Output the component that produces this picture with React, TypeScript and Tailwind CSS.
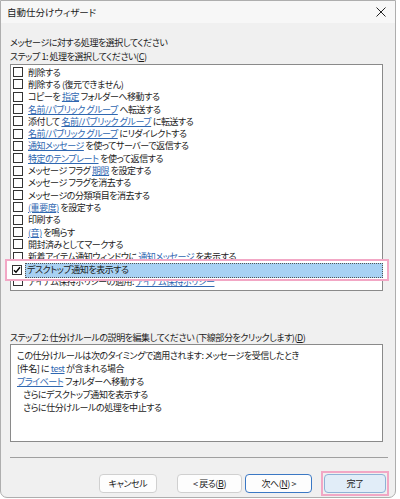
import React from "react"

type Part = string | { link: string }
type Row = { parts: Part[]; checked?: boolean }

const rows: Row[] = [
  { parts: ["削除する"] },
  { parts: ["削除する (復元できません)"] },
  { parts: ["コピーを ", { link: "指定" }, " フォルダーへ移動する"] },
  { parts: [{ link: "名前/パブリック グループ" }, " へ転送する"] },
  { parts: ["添付して ", { link: "名前/パブリック グループ" }, " に転送する"] },
  { parts: [{ link: "名前/パブリック グループ" }, " にリダイレクトする"] },
  { parts: [{ link: "通知メッセージ" }, " を使ってサーバーで返信する"] },
  { parts: [{ link: "特定のテンプレート" }, " を使って返信する"] },
  { parts: ["メッセージ フラグ ", { link: "期限" }, " を設定する"] },
  { parts: ["メッセージ フラグを消去する"] },
  { parts: ["メッセージの分類項目を消去する"] },
  { parts: [{ link: "(重要度)" }, " を設定する"] },
  { parts: ["印刷する"] },
  { parts: [{ link: "(音)" }, " を鳴らす"] },
  { parts: ["開封済みとしてマークする"] },
  { parts: ["新着アイテム通知ウィンドウに ", { link: "通知メッセージ" }, " を表示する"] },
  { parts: ["デスクトップ通知を表示する"], checked: true },
  { parts: ["アイテム保持ポリシーの適用: ", { link: "アイテム保持ポリシー" }] },
]

const Text = ({ parts }: { parts: Part[] }) => (
  <>
    {parts.map((p, i) =>
      typeof p === "string" ? (
        <span key={i} className="whitespace-pre">{p}</span>
      ) : (
        <span key={i} className="whitespace-pre text-[#2f67b1] underline underline-offset-[1px]">{p.link}</span>
      )
    )}
  </>
)

const Check = ({ checked }: { checked?: boolean }) => (
  <span className="w-[10px] h-[10px] border border-[#333] bg-white flex items-center justify-center shrink-0">
    {checked && (
      <svg width="8" height="8" viewBox="0 0 8 8">
        <path d="M1 4.2 L3 6.3 L7 1.3" fill="none" stroke="#000" strokeWidth="1.4" />
      </svg>
    )}
  </span>
)

const Btn = ({ label, className = "" }: { label: React.ReactNode; className?: string }) => (
  <div className={`h-[19px] rounded-[4px] border flex items-center justify-center ${className}`}>{label}</div>
)

export default function App() {
  return (
    <div className="w-[400px] h-[499px] bg-white relative overflow-hidden text-[#1a1a1a] text-[9px] tracking-[-0.45px] [font-family:'Noto_Sans_CJK_JP','Noto_Sans',sans-serif] [font-feature-settings:'palt']">
      <div className="relative w-[396px] h-[498px] bg-[#f0f0f0] border border-[#aeaeae] rounded-b-[7px] flex flex-col">
        {/* title bar */}
        <div className="h-[22px] bg-[#f7f7f7] flex items-center justify-between pl-[6px] pr-[9px] shrink-0">
          <span className="text-[9.5px] tracking-normal">自動仕分けウィザード</span>
          <svg width="10" height="10" viewBox="0 0 10 10">
            <path d="M0.5 0.5 L9.5 9.5 M9.5 0.5 L0.5 9.5" stroke="#222" strokeWidth="1" />
          </svg>
        </div>

        <div className="pl-[9px] pr-[6px] flex flex-col">
          <div className="mt-[13px] leading-[13px]">メッセージに対する処理を選択してください</div>
          <div className="mt-[1px] leading-[13px]">
            ステップ 1: 処理を選択してください(<span className="underline">C</span>)
          </div>

          {/* action list */}
          <div className="mt-[1px] w-[373px] h-[227px] bg-white border border-[#8a8a8a] overflow-hidden pt-[1px]">
            {rows.map((r, i) => (
              <div key={i} className="h-[12.3px] flex items-center gap-[5px] pl-[2px] leading-[11px]">
                <Check checked={r.checked} />
                <div className="flex">
                  <Text parts={r.parts} />
                </div>
              </div>
            ))}
          </div>

          <div className="mt-[40px] leading-[13px]">
            ステップ 2: 仕分けルールの説明を編集してください (下線部分をクリックします)(<span className="underline">D</span>)
          </div>

          {/* rule description */}
          <div className="w-[373px] h-[98px] bg-white border border-[#8a8a8a] pl-[6px] pt-[4px] leading-[13px]">
            <div>この仕分けルールは次のタイミングで適用されます: メッセージを受信したとき</div>
            <div><Text parts={["[件名] に ", { link: "test" }, " が含まれる場合"]} /></div>
            <div><Text parts={[{ link: "プライベート" }, " フォルダーへ移動する"]} /></div>
            <div className="pl-[6px]">さらにデスクトップ通知を表示する</div>
            <div className="pl-[6px]">さらに仕分けルールの処理を中止する</div>
          </div>

          <div className="mt-[15px] w-[378px] h-px bg-[#a0a0a0]" />

          <div className="mt-[13px] flex items-center">
            <Btn label="キャンセル" className="ml-[89px] w-[58px] bg-[#fdfdfd] border-[#d0d0d0]" />
            <Btn
              label={<span>&lt; 戻る(<span className="underline">B</span>)</span>}
              className="ml-[20px] w-[66px] bg-[#fdfdfd] border-[#d0d0d0]"
            />
            <Btn
              label={<span>次へ(<span className="underline">N</span>) &gt;</span>}
              className="ml-[3px] w-[67px] bg-[#fdfdfd] border-[#3b78c4]"
            />
            <div className="ml-[9px] border-[2px] border-[#f2a7c5] p-[1px]">
              <Btn label="完了" className="w-[62px] bg-[#e1edf8] border-[#8fb2d6]" />
            </div>
          </div>
        </div>

        {/* highlighted selection */}
        <div className="absolute left-[4px] top-[258px] w-[384px] h-[22px] border-[2px] border-[#f2a7c5] bg-white flex items-center pl-[5px] pr-[4px] gap-[3px]">
          <Check checked />
          <div className="flex-1 h-[15px] bg-[#a8d1f3] border border-dotted border-[#555] flex items-center pl-[1px]">
            デスクトップ通知を表示する
          </div>
        </div>
      </div>
    </div>
  )
}
